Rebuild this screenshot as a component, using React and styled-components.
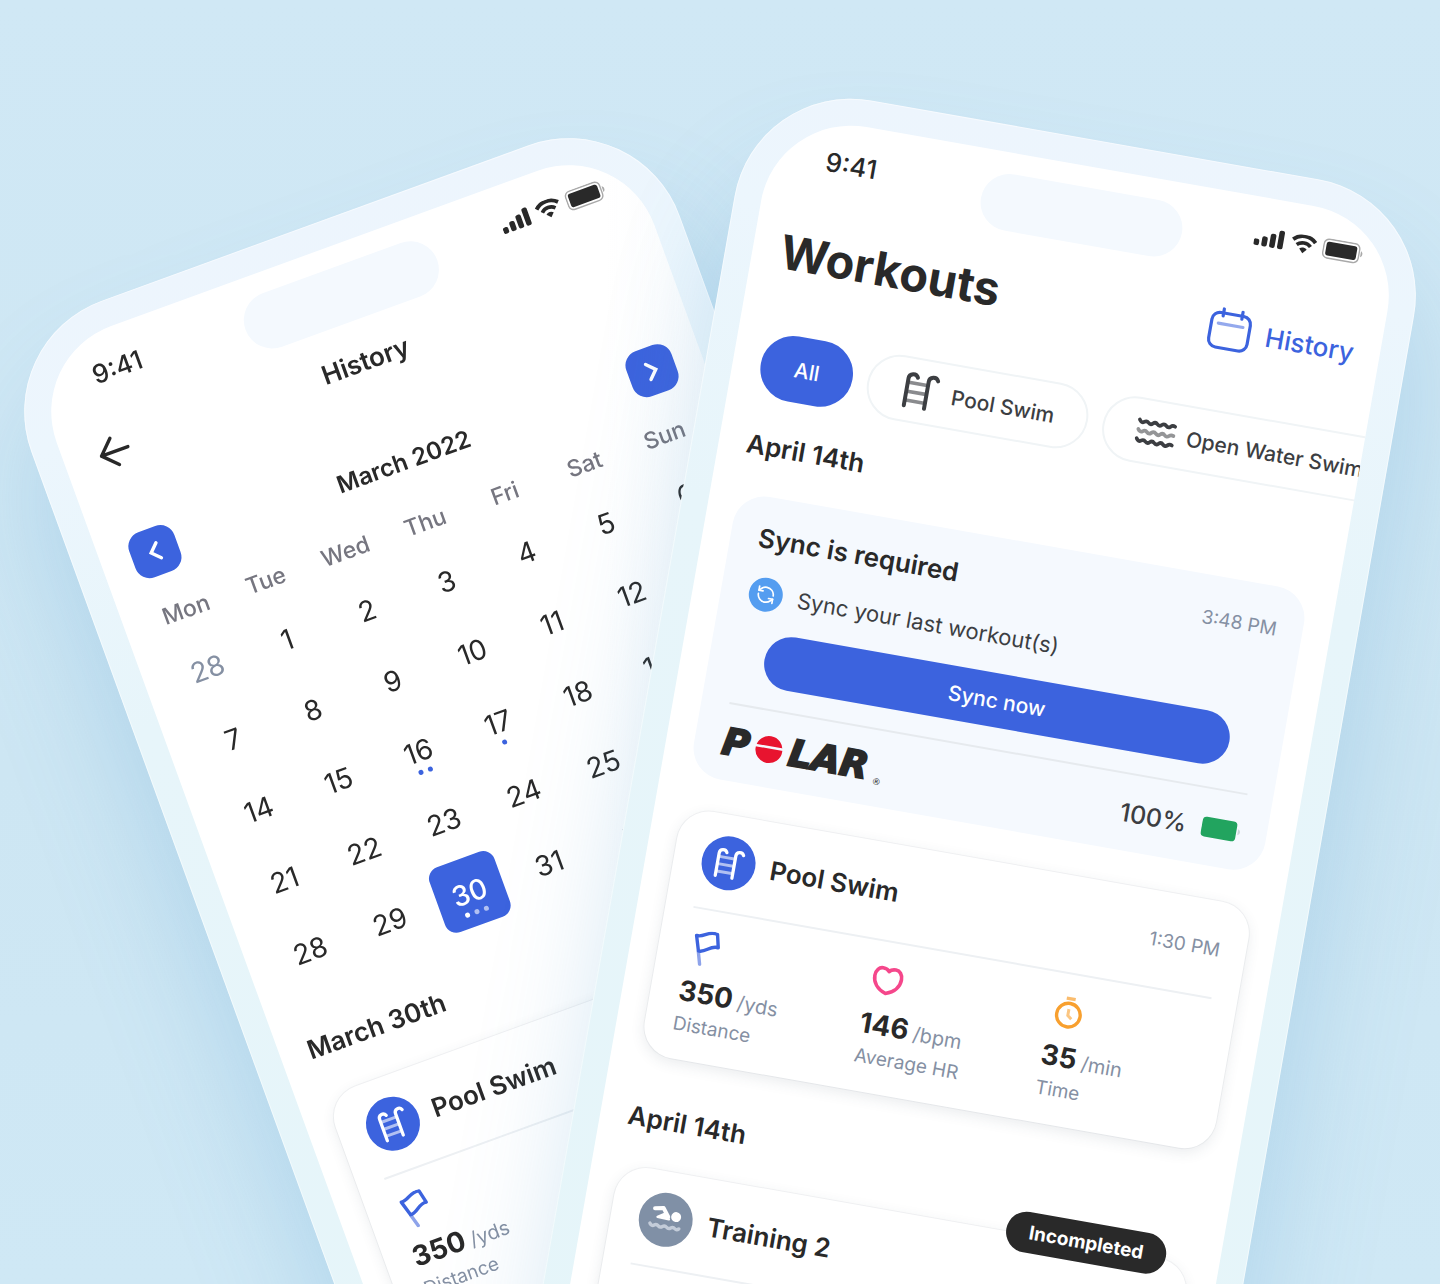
import React from 'react';
import styled, { createGlobalStyle, css } from 'styled-components';
import { RefreshCcw } from 'lucide-react';

const color = {
  ink: '#292929',
  text: '#3c3e42',
  muted: '#8590a3',
  weekday: '#767680',
  blue: '#3c63de',
  sky: '#549df0',
  slate: '#8090a6',
  line: '#e6eaee',
  pink: '#f5478b',
  orange: '#f8a02f',
  green: '#22a45f',
};

const GlobalStyle = createGlobalStyle`
  *, *::before, *::after { box-sizing: border-box; }
  body {
    margin: 0;
    font-family: Inter, "Liberation Sans", sans-serif;
    color: ${color.ink};
    background: #cfe7f4;
  }
  h1, h2, h3, p, dl, dd, dt { margin: 0; font-weight: inherit; }
  button { font: inherit; color: inherit; border: 0; padding: 0; background: none; cursor: pointer; }
  svg { display: block; flex: none; }
`;

const Stage = styled.main`
  position: relative;
  min-height: 100vh;
  overflow: hidden;
  background: linear-gradient(180deg, #d0e8f5 0%, #cde6f3 60%, #cfe8f5 100%);
`;

const Phone = styled.article`
  position: absolute;
  top: ${(p) => p.$top}px;
  left: calc(50% + ${(p) => p.$shift}px);
  width: 690px;
  padding: 27px;
  border-radius: 118px;
  transform: rotate(${(p) => p.$angle}deg);
  transform-origin: 0 0;
  background: linear-gradient(180deg, #edf5fd 0, #ecf6fd 120px, #e7f5fa 420px, #e5f5f9 100%);
  box-shadow: inset 0 0 0 1px rgba(255, 255, 255, 0.5), ${(p) => p.$shadow};
`;

const Screen = styled.div`
  position: relative;
  min-height: 1400px;
  border-radius: 91px;
  overflow: hidden;
  background: #fff;
`;

const StatusBar = styled.header`
  display: flex;
  align-items: center;
  justify-content: space-between;
  height: 80px;
  padding: 0 34px 0 57px;
  font-size: 26px;
  font-weight: 500;
`;

const StatusIcons = styled.div`
  display: flex;
  align-items: center;
  gap: 6px;
`;

const Island = styled.div`
  position: absolute;
  top: 21px;
  left: 50%;
  width: 204px;
  height: 57px;
  margin-left: -102px;
  border-radius: 29px;
  background: #f4f9fe;
`;

const TitleRow = styled.div`
  display: flex;
  align-items: center;
  justify-content: space-between;
  height: 114px;
  padding: 0 26px 0 28px;
`;

const PageTitle = styled.h1`
  font-size: 47px;
  line-height: 60px;
  font-weight: 700;
`;

const HistoryLink = styled.a`
  display: flex;
  align-items: center;
  gap: 14px;
  font-size: 26px;
  font-weight: 500;
  color: ${color.blue};
  text-decoration: none;
`;

const Chips = styled.div`
  display: flex;
  gap: 15px;
  margin: 24px 0 31px;
  padding-left: 28px;
`;

const Chip = styled.button`
  display: flex;
  flex: none;
  align-items: center;
  gap: 11px;
  height: 66px;
  padding: 0 32px;
  border-radius: 33px;
  font-size: 21px;
  font-weight: 500;
  white-space: nowrap;
  color: ${color.text};
  border: 2px solid #f0f4f6;
  ${(p) =>
    p.$active &&
    css`
      color: #fff;
      border-color: ${color.blue};
      background: ${color.blue};
    `}
`;

const Section = styled.section`
  padding: 0 28px;
  & + & { margin-top: 46px; }
`;

const SectionTitle = styled.h2`
  margin-bottom: 32px;
  font-size: 26px;
  line-height: 34px;
  font-weight: 600;
`;

const Cards = styled.div`
  display: flex;
  flex-direction: column;
  gap: 33px;
`;

const SyncCard = styled.div`
  padding: 24px 26px 0 28px;
  border-radius: 32px;
  background: #f5f9fe;
`;

const Row = styled.div`
  display: flex;
  align-items: center;
  justify-content: space-between;
  min-height: 36px;
`;

const CardTitle = styled.h3`
  font-size: 26px;
  line-height: 36px;
  font-weight: 600;
`;

const Time = styled.time`
  font-size: 19px;
  font-weight: 400;
  color: ${color.muted};
`;

const Message = styled.p`
  display: flex;
  align-items: center;
  gap: 15px;
  margin: 19px 0;
  font-size: 22px;
  line-height: 36px;
  color: ${color.text};
`;

const SyncBadge = styled.span`
  display: grid;
  place-items: center;
  width: 34px;
  height: 34px;
  border-radius: 50%;
  color: #fff;
  background: ${color.sky};
`;

const SyncButton = styled.button`
  display: block;
  width: calc(100% - 54px);
  height: 54px;
  margin: 0 27px 21px;
  border-radius: 27px;
  font-size: 21px;
  font-weight: 500;
  color: #fff;
  background: ${color.blue};
`;

const SyncFooter = styled(Row)`
  height: 78px;
  border-top: 2px solid ${color.line};
`;

const Logo = styled.span`
  display: flex;
  align-items: center;
  gap: 6px;
  font-family: "DejaVu Sans", sans-serif;
  font-size: 37px;
  line-height: 38px;
  font-weight: 700;
  font-style: italic;
  -webkit-text-stroke: 2px currentColor;
`;

const Registered = styled.span`
  align-self: flex-end;
  font-size: 9px;
  line-height: 12px;
  font-weight: 400;
  font-style: normal;
  -webkit-text-stroke: 0;
`;

const Charge = styled.span`
  display: flex;
  align-items: center;
  gap: 15px;
  font-size: 25px;
  font-weight: 500;
  color: ${color.text};
`;

const WorkoutCard = styled.div`
  position: relative;
  min-height: 250px;
  padding: 0 0 23px 28px;
  border-radius: 32px;
  background: #fff;
  box-shadow: 0 0 0 1px rgba(70, 90, 110, 0.06), 0 4px 14px rgba(50, 70, 90, 0.1);
`;

const CardHeader = styled.div`
  display: flex;
  align-items: center;
  gap: 15px;
  height: 98px;
  margin-right: 26px;
  border-bottom: 2px solid #edf0f3;
`;

const HeaderTime = styled(Time)`
  margin-left: auto;
`;

const Medallion = styled.span`
  display: grid;
  place-items: center;
  width: 54px;
  height: 54px;
  border-radius: 50%;
  color: #fff;
  background: ${(p) => (p.$idle ? color.slate : color.blue)};
`;

const Stats = styled.dl`
  display: grid;
  grid-template-columns: repeat(3, 1fr);
  padding-top: 20px;
`;

const Stat = styled.div`
  display: flex;
  flex-direction: column;
`;

const StatValue = styled.dd`
  display: flex;
  align-items: baseline;
  gap: 5px;
  margin: 9px 0 4px;
  line-height: 36px;
  font-size: 28px;
  font-weight: 700;
`;

const Unit = styled.span`
  font-size: 20px;
  line-height: 20px;
  font-weight: 400;
  color: ${color.muted};
`;

const StatLabel = styled.dt`
  order: 1;
  font-size: 19px;
  line-height: 24px;
  color: ${color.muted};
`;

const StatusTag = styled.span`
  position: absolute;
  top: -23px;
  right: 26px;
  padding: 0 23px;
  border-radius: 21px;
  font-size: 19px;
  line-height: 41px;
  font-weight: 700;
  color: #fff;
  background: ${color.ink};
`;

const NavRow = styled.div`
  display: grid;
  grid-template-columns: 40px 1fr 40px;
  align-items: center;
  height: 80px;
  padding: 0 31px;
  text-align: center;
`;

const NavTitle = styled.h1`
  font-size: 26px;
  line-height: 36px;
  font-weight: 600;
`;

const MonthRow = styled.div`
  display: flex;
  align-items: center;
  justify-content: space-between;
  margin: 43px 0 25px;
  padding: 0 28px 0 31px;
  font-size: 24px;
  font-weight: 600;
`;

const MonthButton = styled.button`
  display: grid;
  place-items: center;
  width: 48px;
  height: 48px;
  border-radius: 15px;
  color: #fff;
  background: ${color.blue};
`;

const Calendar = styled.table`
  width: calc(100% - 42px);
  margin: 0 20px 40px 22px;
  table-layout: fixed;
  border-collapse: collapse;
  th {
    height: 41px;
    padding: 0 0 9px;
    font-size: 23px;
    line-height: 32px;
    font-weight: 500;
    color: ${color.weekday};
  }
  td { height: 75px; padding: 0; }
`;

const Day = styled.button`
  display: grid;
  grid-template-rows: 1fr auto 1fr;
  justify-items: center;
  width: 69px;
  height: 69px;
  margin: 0 auto;
  border-radius: 12px;
  font-size: 28px;
  line-height: 32px;
  color: ${(p) => (p.$outside ? color.muted : color.ink)};
  ${(p) =>
    p.$selected &&
    css`
      color: #fff;
      font-weight: 500;
      background: ${color.blue};
    `}
`;

const DayNumber = styled.span`
  grid-row: 2;
`;

const Dots = styled.span`
  display: flex;
  grid-row: 3;
  gap: 5px;
  padding-top: 2px;
`;

const Dot = styled.i`
  width: 5px;
  height: 5px;
  border-radius: 50%;
  background: ${(p) => (p.$onBlue ? '#fff' : color.blue)};
  opacity: ${(p) => (p.$faint ? 0.6 : 1)};
`;

const Shade = styled.div`
  position: absolute;
  inset: 0;
  pointer-events: none;
  background: linear-gradient(110deg, rgba(236, 243, 248, 0) 54%, rgba(228, 238, 245, 0.6) 84%);
  mix-blend-mode: multiply;
`;

const SignalIcon = () => (
  <svg width="31" height="22" viewBox="0 0 31 22" fill="currentColor" aria-hidden="true">
    <rect x="0" y="13" width="5.600" height="6.500" rx="2" />
    <rect x="8" y="9.500" width="5.600" height="10" rx="2" />
    <rect x="16" y="5.500" width="5.600" height="14" rx="2" />
    <rect x="24" y="1" width="5.600" height="18.500" rx="2" />
  </svg>
);

const WifiIcon = () => (
  <svg width="26" height="20" viewBox="0 0 26 20" fill="none" stroke="currentColor" aria-hidden="true">
    <path d="M1.600 6.200a16.200 16.200 0 0 1 22.800 0" strokeWidth="3.900" />
    <path d="M6 11a10 10 0 0 1 14 0" strokeWidth="3.700" />
    <path d="M9.200 14.400a5.400 5.400 0 0 1 7.600 0L13 18.500Z" fill="currentColor" stroke="none" />
  </svg>
);

const PhoneBatteryIcon = () => (
  <svg width="41" height="22" viewBox="0 0 41 22" fill="none" aria-hidden="true">
    <rect x="1" y="1" width="36" height="19" rx="5" stroke="#a9a9a9" strokeWidth="1.400" />
    <rect x="3.500" y="3.500" width="31" height="14" rx="2.500" fill="currentColor" />
    <path d="M38.600 7.500c2.400 1 2.400 5 0 6Z" fill="#a9a9a9" />
  </svg>
);

const CalendarIcon = () => (
  <svg width="44" height="44" viewBox="0 0 44 44" fill="none" stroke="currentColor" strokeWidth="3.200" strokeLinecap="round" aria-hidden="true">
    <rect x="2.500" y="6" width="39" height="35" rx="8" />
    <path d="M13 2v7M32 2v7" />
    <path d="M9.500 17h25" opacity="0.55" />
  </svg>
);

const LadderIcon = ({ size = 40 }) => (
  <svg width={size} height={size} viewBox="0 0 40 40" fill="none" stroke="currentColor" strokeLinecap="round" aria-hidden="true">
    <path d="M7 13h20M7 22h20M7 31h20" strokeWidth="3.600" strokeLinecap="butt" opacity="0.6" />
    <path d="M6 36.500V9a4.800 4.800 0 0 1 9.200-2M26.500 36.500V9a4.800 4.800 0 0 1 9.200-2" strokeWidth="4" />
  </svg>
);

const wave = (y) =>
  `M2 ${y}c1.500 2 3 3 4.600 1.700s3-1.500 4.500 0 3 1.500 4.500 0 3-1.500 4.500 0 3 1.500 4.500 0 3-1.500 4.500 0 3 1.500 4.500 0 2.500-1.500 4.400-.7`;

const WavesIcon = () => (
  <svg width="40" height="32" viewBox="0 0 40 32" fill="none" stroke="currentColor" strokeWidth="3.700" strokeLinecap="round" aria-hidden="true">
    <path d={wave(5.5)} />
    <path opacity="0.55" d={wave(15)} />
    <path d={wave(24.5)} />
  </svg>
);

const SwimmerIcon = () => (
  <svg width="40" height="40" viewBox="-20 -20 40 40" fill="none" strokeLinecap="round" strokeLinejoin="round" aria-hidden="true">
    <path d="M-12.500-9.500l8.500-1.700 6 8" stroke="#fff" strokeWidth="4" />
    <path d="M-8.500-1.500l7-4.500 4.500 5Z" fill="#fff" stroke="#fff" strokeWidth="2.500" />
    <circle cx="9.800" cy="-4.500" r="5" fill="#fff" />
    <path d="M-15 6c1.500 2 3 2.500 4.500 1.200s2.800-1.200 4.200 0 2.800 1.200 4.200 0 2.800-1.200 4.200 0 2.800 1.200 4.200 0 2.800-1.200 4.200 0 2.500 1.200 4-.5" stroke="#c3ccd9" strokeWidth="3.400" />
  </svg>
);

const FlagIcon = () => (
  <svg width="40" height="36" viewBox="-20 -18 40 36" fill="none" strokeWidth="3.400" strokeLinecap="round" strokeLinejoin="round" aria-hidden="true">
    <path d="M-7.500 4l3.500 12.500" stroke="#8ea3ea" />
    <path d="M-12-11.500c7 1.500 11-7 20.500-4.500l3 13c-8-1.500-12 7.500-19 6.500Z" stroke={color.blue} />
  </svg>
);

const HeartIcon = () => (
  <svg width="40" height="36" viewBox="0 0 40 36" fill="none" stroke={color.pink} strokeWidth="3.600" strokeLinejoin="round" aria-hidden="true">
    <path d="M20 31C11 28 6.500 21.500 6.500 14.800 6.500 9.500 9.700 6 13.500 6c2.900 0 5.200 1 6.500 2.800C21.300 7 23.600 6 26.500 6c3.800 0 7 3.500 7 8.800C33.500 21.500 29 28 20 31Z" />
  </svg>
);

const TimerIcon = () => (
  <svg width="40" height="36" viewBox="0 0 40 36" fill="none" stroke={color.orange} strokeWidth="3.400" aria-hidden="true">
    <circle cx="20" cy="20.500" r="11.800" />
    <path d="M15.500 4h9" opacity="0.7" />
    <path d="M19.500 14.500V21l4 3" opacity="0.6" strokeWidth="3" />
  </svg>
);

const ChargeIcon = () => (
  <svg width="40" height="22" viewBox="0 0 40 22" aria-hidden="true">
    <rect x="0.500" y="1" width="35" height="20" rx="4" fill={color.green} />
    <path d="M37 8c3 1.200 3 5 0 6Z" fill="#cdd5dc" />
  </svg>
);

const PolarDisc = () => (
  <svg width="28" height="28" viewBox="0 0 28 28" aria-hidden="true">
    <circle cx="14" cy="14" r="13.500" fill="#e8142f" />
    <path d="M0 10.500h28v2.500H0Z" fill="#f5f9fe" />
  </svg>
);

const BackIcon = () => (
  <svg width="40" height="36" viewBox="0 0 40 36" fill="none" stroke="currentColor" strokeWidth="3.400" strokeLinecap="round" strokeLinejoin="round" aria-hidden="true">
    <path d="M34.500 17H6.500M20.500 3L6.500 17l14 14" />
  </svg>
);

const ChevronIcon = ({ forward }) => (
  <svg width="24" height="24" viewBox="0 0 24 24" fill="none" stroke="currentColor" strokeWidth="3.400" strokeLinecap="round" aria-hidden="true">
    <path d={forward ? 'M8 4l8 8-8 8' : 'M16 4l-8 8 8 8'} />
  </svg>
);

const PhoneStatus = () => (
  <>
    <StatusBar>
      <span>9:41</span>
      <StatusIcons>
        <SignalIcon />
        <WifiIcon />
        <PhoneBatteryIcon />
      </StatusIcons>
    </StatusBar>
    <Island />
  </>
);

const poolStats = [
  { icon: <FlagIcon />, value: '350', unit: '/yds', label: 'Distance' },
  { icon: <HeartIcon />, value: '146', unit: '/bpm', label: 'Average HR' },
  { icon: <TimerIcon />, value: '35', unit: '/min', label: 'Time' },
];

const Workout = ({ name, time, icon, idle, tag, stats }) => (
  <WorkoutCard>
    {tag && <StatusTag>{tag}</StatusTag>}
    <CardHeader>
      <Medallion $idle={idle}>{icon}</Medallion>
      <CardTitle>{name}</CardTitle>
      {time && <HeaderTime>{time}</HeaderTime>}
    </CardHeader>
    {stats && (
      <Stats>
        {stats.map((s) => (
          <Stat key={s.label}>
            {s.icon}
            <StatLabel>{s.label}</StatLabel>
            <StatValue>
              {s.value}
              <Unit>{s.unit}</Unit>
            </StatValue>
          </Stat>
        ))}
      </Stats>
    )}
  </WorkoutCard>
);

const weekdays = ['Mon', 'Tue', 'Wed', 'Thu', 'Fri', 'Sat', 'Sun'];
const weeks = [
  [28, 1, 2, 3, 4, 5, 6],
  [7, 8, 9, 10, 11, 12, 13],
  [14, 15, 16, 17, 18, 19, 20],
  [21, 22, 23, 24, 25, 26, 27],
  [28, 29, 30, 31, 1, 2, 3],
];
const events = { 16: 2, 17: 1, 30: 3 };

const MonthTable = () => (
  <Calendar>
    <thead>
      <tr>
        {weekdays.map((d) => (
          <th key={d} scope="col">{d}</th>
        ))}
      </tr>
    </thead>
    <tbody>
      {weeks.map((week, w) => (
        <tr key={w}>
          {week.map((d) => {
            const outside = (w === 0 && d > 20) || (w === 4 && d < 10);
            const selected = d === 30;
            const count = outside ? 0 : events[d] || 0;
            return (
              <td key={d}>
                <Day type="button" $outside={outside} $selected={selected}>
                  <DayNumber>{d}</DayNumber>
                  {count > 0 && (
                    <Dots>
                      {Array.from({ length: count }, (_, i) => (
                        <Dot key={i} $onBlue={selected} $faint={selected && i > 0} />
                      ))}
                    </Dots>
                  )}
                </Day>
              </td>
            );
          })}
        </tr>
      ))}
    </tbody>
  </Calendar>
);

const HistoryPhone = () => (
  <Phone $angle={-20} $shift={-729} $top={341} $shadow="-10px 80px 110px rgba(90, 160, 210, 0.26)">
    <Screen>
      <PhoneStatus />
      <NavRow>
        <button type="button" aria-label="Back"><BackIcon /></button>
        <NavTitle>History</NavTitle>
      </NavRow>
      <MonthRow>
        <MonthButton type="button" aria-label="Previous month"><ChevronIcon /></MonthButton>
        <span>March 2022</span>
        <MonthButton type="button" aria-label="Next month"><ChevronIcon forward /></MonthButton>
      </MonthRow>
      <MonthTable />
      <Section>
        <SectionTitle>March 30th</SectionTitle>
        <Workout name="Pool Swim" icon={<LadderIcon size={33} />} stats={poolStats} />
      </Section>
      <Shade />
    </Screen>
  </Phone>
);

const WorkoutsPhone = () => (
  <Phone $angle={10} $shift={35} $top={80} $shadow="10px 80px 110px rgba(90, 160, 210, 0.26)">
    <Screen>
      <PhoneStatus />
      <TitleRow>
        <PageTitle>Workouts</PageTitle>
        <HistoryLink href="#history"><CalendarIcon />History</HistoryLink>
      </TitleRow>
      <Chips>
        <Chip type="button" $active>All</Chip>
        <Chip type="button"><LadderIcon />Pool Swim</Chip>
        <Chip type="button"><WavesIcon />Open Water Swim</Chip>
      </Chips>
      <Section>
        <SectionTitle>April 14th</SectionTitle>
        <Cards>
          <SyncCard>
            <Row>
              <CardTitle>Sync is required</CardTitle>
              <Time>3:48 PM</Time>
            </Row>
            <Message>
              <SyncBadge><RefreshCcw size={20} strokeWidth={2} /></SyncBadge>
              Sync your last workout(s)
            </Message>
            <SyncButton type="button">Sync now</SyncButton>
            <SyncFooter>
              <Logo>P<PolarDisc />LAR<Registered>®</Registered></Logo>
              <Charge>100%<ChargeIcon /></Charge>
            </SyncFooter>
          </SyncCard>
          <Workout name="Pool Swim" time="1:30 PM" icon={<LadderIcon size={33} />} stats={poolStats} />
        </Cards>
      </Section>
      <Section>
        <SectionTitle>April 14th</SectionTitle>
        <Workout name="Training 2" icon={<SwimmerIcon />} idle tag="Incompleted" />
      </Section>
    </Screen>
  </Phone>
);

export default function App() {
  return (
    <>
      <GlobalStyle />
      <Stage>
        <HistoryPhone />
        <WorkoutsPhone />
      </Stage>
    </>
  );
}
